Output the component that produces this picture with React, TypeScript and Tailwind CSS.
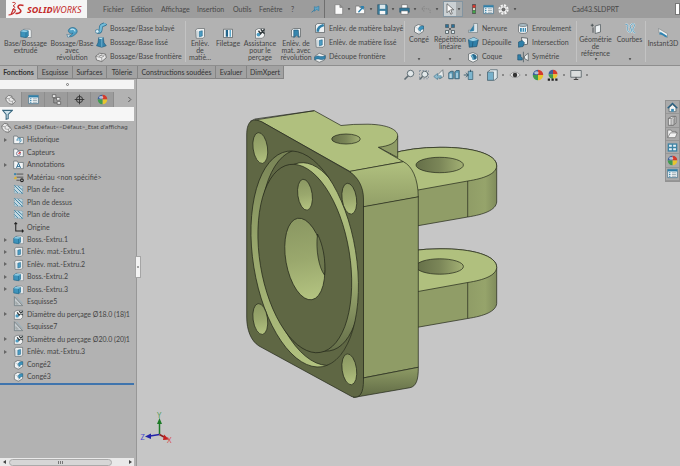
import type { ReactNode } from 'react';

type IconProps = { name: string; className?: string };

const glyphs: Record<string, ReactNode> = {
  extrude: (
    <>
      <path d="M5 3h8l2 2v9H5z" fill="#eef2f4" stroke="#6d7478" strokeWidth="0.8" />
      <path d="M1 6l3-2 7 1v7l-3 2-7-1z" fill="#3d93bb" stroke="#1d6488" strokeWidth="0.9" />
      <path d="M1 6l7 1 3-2-7-1z" fill="#8fcbe2" />
      <path d="M8 7v7" stroke="#1d6488" strokeWidth="0.8" />
    </>
  ),
  revolve: (
    <>
      <path d="M3 5a6 5 0 1 1 9 5c-3 3-7 4-10 2 3 0 6-1 7-4-2 1-5 1-6-3z" fill="#4ea0c6" stroke="#24688c" strokeWidth="0.9" />
      <path d="M6 4c2-2 6-1 6 2" fill="none" stroke="#bfe3f0" strokeWidth="1.6" />
      <path d="M1 10l5 1-3 3z" fill="#e8f2f6" stroke="#24688c" strokeWidth="0.7" />
    </>
  ),
  sweep: (
    <>
      <path d="M3 13c6 1 4-4 5-7s5-2 6-4" fill="none" stroke="#24688c" strokeWidth="5" />
      <path d="M3 13c6 1 4-4 5-7s5-2 6-4" fill="none" stroke="#72bbd8" strokeWidth="3.2" />
      <circle cx="3" cy="12.500" r="2.500" fill="#d8edf5" stroke="#24688c" strokeWidth="0.8" />
    </>
  ),
  loft: (
    <>
      <path d="M5 2h6l1 7 3 4-6 2-7-2 2-4z" fill="#3482aa" stroke="#1b5577" strokeWidth="0.8" />
      <path d="M5 2h6l-2 2H6z" fill="#b7dcea" />
      <path d="M9 4v11" stroke="#7fbad3" strokeWidth="1" />
    </>
  ),
  boundary: (
    <>
      <path d="M1 7l5-4 8 1 1 5-6 5-7-2z" fill="#ececec" stroke="#555" strokeWidth="0.9" />
      <path d="M1 7l8 2 5-5M9 9v5M4 5l8 2M5 8l5-4" fill="none" stroke="#666" strokeWidth="0.7" />
    </>
  ),
  cut: (
    <>
      <path d="M2 4l3-2h9v11l-2 2H3z" fill="#edf0f1" stroke="#5f6669" strokeWidth="0.9" />
      <path d="M7 6l4-1v7l-4 1z" fill="#4b9cc3" stroke="#24688c" strokeWidth="0.8" />
      <path d="M4 5v8" stroke="#9dafb7" strokeWidth="1" />
    </>
  ),
  thread: (
    <>
      <path d="M2 3h12v11H2z" fill="#f0f2f3" stroke="#4d5558" strokeWidth="0.9" />
      <path d="M5 4h3v9H5z" fill="#23658b" />
      <path d="M10 4h2v9h-2z" fill="#5aaace" />
    </>
  ),
  hole: (
    <>
      <path d="M2 4l4-2h8v10l-3 3H2z" fill="#f1f2f2" stroke="#5f6669" strokeWidth="0.9" />
      <circle cx="6" cy="10" r="2.500" fill="#4b9cc3" />
      <path d="M6 5l3 4M9 3l5 6M8 10l6-7" stroke="#30383b" strokeWidth="1.700" />
    </>
  ),
  revcut: (
    <>
      <path d="M2 4l3-2h9v11H2z" fill="#eef1f2" stroke="#50585b" strokeWidth="0.9" />
      <path d="M5 4h6l1 10-3-3-4 3z" fill="#3685ad" stroke="#1b5577" strokeWidth="0.8" />
    </>
  ),
  sweepcut: (
    <>
      <path d="M2 4l3-2h9v12H2z" fill="#eef1f2" stroke="#50585b" strokeWidth="0.9" />
      <path d="M5 13c0-6 3-7 8-9" fill="none" stroke="#2f7fa8" strokeWidth="3.500" />
    </>
  ),
  surfcut: (
    <>
      <path d="M1 7l6-4 8 3-1 6-7 3-6-3z" fill="#eef1f2" stroke="#50585b" strokeWidth="0.8" />
      <path d="M1 8c4-4 8 2 14-2v4c-6 4-9-2-14 2z" fill="#3685ad" stroke="#1b5577" strokeWidth="0.7" />
    </>
  ),
  fillet: (
    <>
      <path d="M2 5l5-3 7 2v7l-6 4-6-3z" fill="#f1f3f4" stroke="#555d60" strokeWidth="0.9" />
      <path d="M7 9c0-3 2-5 7-5v4c-3 0-4 1-4 3z" fill="#3b93bd" stroke="#1f678b" strokeWidth="0.8" />
      <path d="M2 5l6 3v7" fill="none" stroke="#aab4b8" strokeWidth="0.7" />
    </>
  ),
  pattern: (
    <>
      <path d="M2 2h4v4H2zM10 2h4v4h-4z" fill="#2a7199" stroke="#455056" strokeWidth="0.8" />
      <path d="M2 10h4v4H2zM10 10h4v4h-4z" fill="#dcebf1" stroke="#455056" strokeWidth="1" />
      <path d="M6 6l4 4M10 6l-4 4" stroke="#455056" strokeWidth="1" />
    </>
  ),
  rib: (
    <>
      <path d="M9 2h5v12H2v-3h7z" fill="#d9e4e9" stroke="#6a7579" strokeWidth="0.8" />
      <path d="M9 4v8l-6 1z" fill="#2f7fa8" />
    </>
  ),
  draft: (
    <>
      <path d="M2 5l7-3 6 3-2 9-10 1z" fill="#2f7fa8" stroke="#1b4e6c" strokeWidth="0.9" />
      <path d="M2 5l7-3 6 3-7 2z" fill="#9ccfe3" />
      <path d="M8 7l-1 8" stroke="#1b4e6c" strokeWidth="0.8" />
    </>
  ),
  shell: (
    <>
      <path d="M2 4l6-2 6 3v7l-6 3-6-3z" fill="#f2f4f4" stroke="#555d60" strokeWidth="0.9" />
      <path d="M5 6a4 4 0 0 1 7 5l-4 1z" fill="#24688c" />
      <path d="M5 6c3 0 3 2 3 6" fill="none" stroke="#7fc0da" strokeWidth="1.500" />
    </>
  ),
  wrap: (
    <>
      <path d="M2 4v9c2 3 10 3 12 0V4z" fill="#f0f2f3" stroke="#555d60" strokeWidth="0.9" />
      <ellipse cx="8" cy="4" rx="6" ry="2" fill="#a9bcc5" stroke="#555d60" strokeWidth="0.8" />
      <path d="M4 8h8v5H4z" fill="#3b8cb4" />
      <path d="M7 8v5M10 8v5" stroke="#fff" />
    </>
  ),
  intersect: (
    <>
      <path d="M6 2l8 1v8l-7 1z" fill="#f0f2f3" stroke="#454d50" strokeWidth="1" />
      <path d="M2 8l5-2 3 3-2 5-6 1z" fill="#2f7fa8" stroke="#1b4e6c" strokeWidth="0.8" />
    </>
  ),
  mirror: (
    <>
      <path d="M1 5h4v3l2 1v3H1z" fill="#2f7fa8" stroke="#1b4e6c" strokeWidth="0.8" />
      <path d="M15 3v10l-5-3V7z" fill="#eef1f2" stroke="#454d50" strokeWidth="0.9" />
      <path d="M8.500 1v14" stroke="#47565d" strokeWidth="1" />
    </>
  ),
  geometry: (
    <>
      <path d="M7 4l7-2v10l-7 2z" fill="#eef2f4" stroke="#505a5e" strokeWidth="1" />
      <path d="M1 3h4M3 1v4M4 6v7" stroke="#454d50" strokeWidth="1.200" />
    </>
  ),
  curves: (
    <>
      <path d="M2 2c6-1 1 5 3 8s5 3 5 0-3-4-1-7 5-2 5 0-3 4-2 7 1 3 3 3" fill="none" stroke="#e3eef2" strokeWidth="2.200" />
      <path d="M2 2c6-1 1 5 3 8s5 3 5 0-3-4-1-7 5-2 5 0-3 4-2 7 1 3 3 3" fill="none" stroke="#4a91b3" strokeWidth="1.200" />
    </>
  ),
  instant: (
    <>
      <path d="M2 2l12 7v5L3 8z" fill="#f2f4f4" stroke="#737c80" strokeWidth="0.8" />
      <path d="M5 8l8 5" stroke="#2d83b2" strokeWidth="2.500" />
      <path d="M3 10l1-4 3 4z" fill="#2d83b2" />
    </>
  ),
  part: (
    <>
      <path d="M1 6l4-4 5 1v3l3 1 2 4-4 4-5-1-4-4z" fill="#eaeaea" stroke="#5a5a5a" strokeWidth="1" />
      <path d="M1 6l5 1 4-4M6 7v3l5 1 2-4M11 11v4" fill="none" stroke="#777" strokeWidth="0.8" />
    </>
  ),
  list: (
    <>
      <path d="M1 2h14v12H1z" fill="#f4f7f8" stroke="#376b86" strokeWidth="1" />
      <path d="M1 2h14v3H1z" fill="#2f7fa8" />
      <path d="M3 7h2M3 9.500h2M3 12h2" stroke="#2f7fa8" strokeWidth="1.500" />
      <path d="M7 7h6M7 9.500h6M7 12h6" stroke="#768c97" />
    </>
  ),
  config: (
    <>
      <path d="M4 2v11h5M4 6h5" fill="none" stroke="#555" />
      <path d="M2 1h5v4H2zM8 5h5v4H8zM9 11h5v4H9z" fill="#eee" stroke="#555" strokeWidth="1" />
    </>
  ),
  target: (
    <>
      <circle cx="8" cy="8" r="4.500" fill="none" stroke="#333" strokeWidth="1.400" />
      <path d="M8 1v14M1 8h14" stroke="#333" strokeWidth="1.300" />
    </>
  ),
  ball: (
    <>
      <path d="M8 8V1a7 7 0 0 0-7 7z" fill="#3c5f9a" />
      <path d="M8 8V1a7 7 0 0 1 7 7z" fill="#d33b2c" />
      <path d="M8 8h7a7 7 0 0 1-7 7z" fill="#e8c52f" />
      <path d="M8 8v7a7 7 0 0 1-7-7z" fill="#3f9b4e" />
      <ellipse cx="6" cy="5" rx="3" ry="2" fill="#fff" opacity="0.6" />
    </>
  ),
  scene: (
    <>
      <path d="M8 7V1a6 6 0 0 0-6 6z" fill="#3c5f9a" />
      <path d="M8 7V1a6 6 0 0 1 6 6z" fill="#d33b2c" />
      <path d="M8 7h6a6 6 0 0 1-6 6z" fill="#e8c52f" />
      <path d="M8 7v6a6 6 0 0 1-6-6z" fill="#3f9b4e" />
      <path d="M1 14h14" stroke="#222" strokeWidth="3" strokeDasharray="3 2" />
    </>
  ),
  folder: (
    <>
      <path d="M1 3h5l1 2h8v9H1z" fill="#f3f5f6" stroke="#5a666c" strokeWidth="1" />
      <path d="M6 10a3 3 0 1 1 3 2M9 7v3" fill="none" stroke="#2f7fa8" strokeWidth="1.300" />
    </>
  ),
  sensor: (
    <>
      <path d="M1 3h5l1 2h8v9H1z" fill="#f3f5f6" stroke="#5a666c" strokeWidth="1" />
      <circle cx="8" cy="9.500" r="3" fill="none" stroke="#557" />
      <path d="M8 10l3-3" stroke="#d22" strokeWidth="1.500" />
    </>
  ),
  annot: (
    <>
      <path d="M1 3h5l1 2h8v9H1z" fill="#f3f5f6" stroke="#5a666c" strokeWidth="1" />
      <path d="M5 13l3-7 3 7M6 11h4" fill="none" stroke="#2a6c93" strokeWidth="1.400" />
    </>
  ),
  material: (
    <>
      <path d="M5 3h10M5 7.500h10M5 12h5" stroke="#444" strokeWidth="1.200" />
      <circle cx="3" cy="3" r="1.700" fill="#3a86ae" />
      <path d="M1 9l3-3 2 3-3 2z" fill="#d9b53b" />
      <circle cx="13" cy="12" r="2" fill="none" stroke="#222" strokeWidth="1.500" />
    </>
  ),
  plane: (
    <>
      <path d="M2 2l12 1v11L2 13z" fill="#c3d8e1" stroke="#6d98ac" strokeWidth="1" strokeDasharray="2 1" />
      <path d="M2 2l12 12M7 3l7 6M2 8l5 5" stroke="#4485a4" strokeWidth="1.400" />
    </>
  ),
  origin: <path d="M4 1v12h11M2 3l2-2 2 2M13 11l2 2-2 2" fill="none" stroke="#222" strokeWidth="1.500" />,
  sketch: (
    <>
      <path d="M2 1v13h12z" fill="#c6cccf" stroke="#657177" strokeWidth="1" />
      <path d="M4 8v4h4z" fill="#b2b2b2" stroke="#8a969b" strokeWidth="0.700" />
      <path d="M5 1l9 10" stroke="#8fb0bf" strokeWidth="1.200" />
    </>
  ),
  home: (
    <>
      <path d="M3 8v6h10V8L8 4z" fill="#f4f4f4" stroke="#4a5a62" strokeWidth="1" />
      <path d="M1 9l7-7 7 7" fill="none" stroke="#255f82" strokeWidth="2" />
      <path d="M6 10h4v4H6z" fill="#3d8fb8" />
    </>
  ),
  library: (
    <>
      <path d="M2 5l5-3h6v10l-4 3H2z" fill="#e4e4e4" stroke="#5a5a5a" strokeWidth="1" />
      <path d="M6 6v9M9 5v10M11 3v10M2 5h5l4-3" fill="none" stroke="#666" strokeWidth="1" />
    </>
  ),
  open: <path d="M1 14V3h5l1 2h6v2h2l-3 7zM1 14l4-7h9" fill="#f3f3f3" stroke="#6a6a6a" strokeWidth="1" />,
  palette: (
    <>
      <path d="M1 2h14v12H1z" fill="#3f84a5" />
      <path d="M3 4h4v3H3zM9 4h4v3H9zM3 9h4v3H3zM9 9h4v3H9z" fill="#e7f1f5" />
    </>
  ),
  file: <path d="M3 1h7l4 4v10H3zM10 1v4h4" fill="#fbfbfb" stroke="#777" strokeWidth="0.9" />,
  openfile: (
    <>
      <path d="M1 14V3h5l1 2h7v9z" fill="#fafafa" stroke="#666" strokeWidth="0.9" />
      <path d="M5 12l7-8M8 4h4v4" fill="none" stroke="#2d7fab" strokeWidth="1.900" />
    </>
  ),
  save: (
    <>
      <path d="M1 1h13l1 2v12H1z" fill="#3c7f9f" stroke="#33576a" strokeWidth="1" />
      <path d="M4 1h8v6H4z" fill="#dce8ed" />
      <path d="M4 10h8v5H4z" fill="#f7f7f7" />
    </>
  ),
  print: (
    <>
      <path d="M4 1h8v5H4z" fill="#fff" stroke="#555" strokeWidth="0.8" />
      <path d="M1 6h14v6H1z" fill="#2f7699" stroke="#2c5368" strokeWidth="0.8" />
      <path d="M3 10h10v5H3z" fill="#fff" stroke="#555" strokeWidth="0.8" />
    </>
  ),
  undo: <path d="M5 3L1 7l4 4M1 7h9a4 4 0 0 1 3 6" fill="none" stroke="#888" strokeWidth="1.500" strokeDasharray="2 1" />,
  cursor: <path d="M4 1v12l3-3 2 5 2-1-2-5h4z" fill="#fff" stroke="#555" strokeWidth="1" />,
  light: (
    <>
      <path d="M5 0h6v16H5z" fill="#555" />
      <circle cx="8" cy="3.500" r="2.400" fill="#d43a2f" />
      <circle cx="8" cy="8" r="1.800" fill="#f2ead0" />
      <circle cx="8" cy="12.500" r="2.400" fill="#44a24a" />
    </>
  ),
  gear: (
    <>
      <circle cx="8" cy="8" r="6" fill="none" stroke="#f5f5f5" strokeWidth="3" strokeDasharray="3 1.700" />
      <circle cx="8" cy="8" r="4.500" fill="#f1f1f1" />
      <circle cx="8" cy="8" r="2.300" fill="#777" stroke="#444" strokeWidth="1" />
    </>
  ),
  pin: (
    <>
      <path d="M6 3l3 1 5-2v8l-4-2-4 3z" fill="#61a6c8" stroke="#2d7aa1" strokeWidth="1" />
      <path d="M7 8l-6 5" stroke="#2d7aa1" strokeWidth="1.500" />
    </>
  ),
  zoom: (
    <>
      <circle cx="10" cy="6" r="4.300" fill="#e2e8ea" stroke="#5d6b72" strokeWidth="1.300" />
      <path d="M7 9l-5 5" stroke="#5d6b72" strokeWidth="2.200" />
    </>
  ),
  zoomarea: (
    <>
      <path d="M2 2h12v11H2z" fill="none" stroke="#789" strokeDasharray="2 2" />
      <circle cx="9" cy="7" r="4" fill="#e2e8ea" stroke="#5d6b72" strokeWidth="1.300" />
      <path d="M6 10l-4 4" stroke="#5d6b72" strokeWidth="2" />
    </>
  ),
  prev: (
    <>
      <path d="M13 1L5 9l4 4 5-3z" fill="#e7eaeb" stroke="#5d6b72" strokeWidth="1" />
      <path d="M1 10l5-4v3h5v3H6v2z" fill="#8fbacd" stroke="#316b86" strokeWidth="0.700" />
    </>
  ),
  section: (
    <>
      <path d="M1 5l3-2h3v10H1zM9 4l2-2h4v11H9z" fill="#5b9bb8" stroke="#31576a" strokeWidth="1" />
      <path d="M2 6h3v6H2zM11 5h2v7h-2z" fill="#b9d7e3" />
    </>
  ),
  orient: (
    <>
      <path d="M7 3h6v11H7z" fill="#7db6cf" stroke="#31576a" strokeWidth="0.900" />
      <path d="M1 8h6M4 5l3 3-3 3M10 1v3" fill="none" stroke="#31576a" strokeWidth="1.200" />
    </>
  ),
  display: (
    <>
      <path d="M2 4l4-3h9v11l-4 3H2z" fill="#dfe9ed" stroke="#4d626c" strokeWidth="1" />
      <path d="M2 4h8v11H2z" fill="#77b1cb" stroke="#4d626c" strokeWidth="0.800" />
    </>
  ),
  eye: (
    <>
      <path d="M1 8q7-8 14 0-7 7-14 0z" fill="#e5e5e5" stroke="#888" strokeWidth="1" />
      <circle cx="8" cy="8" r="3" fill="#333" />
    </>
  ),
  monitor: (
    <>
      <path d="M1 2h14v9H1z" fill="#dadddd" stroke="#606a6e" strokeWidth="1.200" />
      <path d="M8 11v3M5 14h6" stroke="#444" strokeWidth="1.500" />
    </>
  ),
};

function Icon({ name, className = 'w-3 h-3' }: IconProps) {
  return (
    <svg viewBox="0 0 16 16" className={`shrink-0 ${className}`} aria-hidden="true">
      {glyphs[name]}
    </svg>
  );
}

function Caret() {
  return (
    <svg viewBox="0 0 6 4" className="w-[4px] h-[3px] shrink-0" aria-hidden="true">
      <path d="M1 0h4L3 3z" fill="#3c3c3c" />
    </svg>
  );
}

const menus = [
  { label: 'Fichier', w: 'w-7' },
  { label: 'Edition', w: 'w-[30px]' },
  { label: 'Affichage', w: 'w-9' },
  { label: 'Insertion', w: 'w-9' },
  { label: 'Outils', w: 'w-[26px]' },
  { label: 'Fenêtre', w: 'w-8' },
  { label: '?', w: 'w-4' },
];

function TitleBar() {
  return (
    <header className="flex h-[18px] items-center bg-[#9c9c9c] overflow-hidden">
      <div className="ml-[6px] flex h-[18px] w-[81px] shrink-0 items-center gap-[3px] bg-[#f5f5f5] pl-[2px] text-[#c42b2b]">
        <svg viewBox="0 0 32 32" className="h-4 w-4 shrink-0" aria-hidden="true">
          <path d="M9 3c8-1 7 3 1 7 6 1 3 5-1 7" fill="none" stroke="#c42b2b" strokeWidth="2" />
          <path d="M1 28c12-1 18-11 10-12L6 27" fill="none" stroke="#c42b2b" strokeWidth="2.400" />
          <path d="M31 9c-12-3-13 3-8 7s3 9-8 9" fill="none" stroke="#c42b2b" strokeWidth="3" />
        </svg>
        <span className="font-['Noto_Sans','Open_Sans',sans-serif] text-[9px] leading-none italic">
          <b>SOLID</b>WORKS
        </span>
      </div>
      <nav className="ml-4 flex text-[7px] leading-none text-[#484848]">
        {menus.map(m => (
          <button key={m.label} type="button" className={`shrink-0 text-left ${m.w}`}>{m.label}</button>
        ))}
      </nav>
      <Icon name="pin" className="ml-1 h-[9px] w-[9px]" />
      <div className="ml-1 flex h-full shrink-0 items-center gap-[4px] border-l border-[#6f6f6f] pl-2">
        {['file', 'openfile', 'save', 'print', 'undo'].map(name => (
          <button key={name} type="button" aria-label={name} className="flex items-center gap-[3px]">
            <Icon name={name} className="h-[11px] w-[11px]" />
            <Caret />
          </button>
        ))}
        <button type="button" aria-label="cursor" className="flex h-4 items-center border border-[#8394a0] bg-[#cbd1d4]">
          <Icon name="cursor" />
          <span className="flex h-full items-center bg-[#a7acae] px-px"><Caret /></span>
        </button>
        <button type="button" aria-label="light" className="ml-[2px]"><Icon name="light" className="h-[10px] w-[10px]" /></button>
        <button type="button" aria-label="list"><Icon name="list" className="h-[11px] w-[11px]" /></button>
        <button type="button" aria-label="gear" className="flex items-center gap-1">
          <Icon name="gear" className="h-[11px] w-[11px]" />
          <Caret />
        </button>
      </div>
      <h1 className="ml-auto text-[7px] leading-none text-[#484848]">Cad43.SLDPRT</h1>
      <div className="ml-[56px] h-3 w-[5px] shrink-0 border border-[#777] bg-white" />
    </header>
  );
}

function BigTool({ icon, lines, width, arrow, high }: { icon: string; lines: string[]; width: string; arrow?: boolean; high?: boolean }) {
  return (
    <button type="button" className={`flex h-full shrink-0 flex-col items-center ${width} ${high ? 'pt-[5px]' : 'pt-[9px]'}`}>
      <Icon name={icon} className="mb-px h-3 w-3" />
      {lines.map(line => (
        <span key={line} className="whitespace-nowrap text-[7px] leading-[7px]">{line}</span>
      ))}
      {arrow && <span className="mt-auto flex pb-1"><Caret /></span>}
    </button>
  );
}

function SmallTools({ items, width }: { items: string[][]; width: string }) {
  return (
    <div className={`flex h-full shrink-0 flex-col justify-around pt-[3px] pb-px ${width}`}>
      {items.map(([icon, label]) => (
        <button key={label} type="button" className="flex items-center gap-[3px] whitespace-nowrap text-[7px] leading-none">
          <Icon name={icon} />
          {label}
        </button>
      ))}
    </div>
  );
}

function Divider() {
  return <div className="my-[3px] w-px shrink-0 bg-[#c3c3c3]" />;
}

function Ribbon() {
  return (
    <div className="flex h-12 overflow-hidden border-b border-[#8e8e8e] bg-[#b2b2b2] pl-[2px] text-[#454545]">
      <BigTool icon="extrude" width="w-[47px]" lines={['Base/Bossage', 'extrudé']} />
      <BigTool icon="revolve" width="w-[46px]" lines={['Bossage/Base', 'avec', 'révolution']} />
      <SmallTools width="w-[90px]" items={[['sweep', 'Bossage/Base balayé'], ['loft', 'Bossage/Base lissé'], ['boundary', 'Bossage/Base frontière']]} />
      <Divider />
      <BigTool icon="cut" width="w-[28px]" lines={['Enlèv.', 'de', 'matiè...']} />
      <BigTool icon="thread" width="w-[28px]" lines={['Filetage']} />
      <BigTool icon="hole" width="w-[36px]" lines={['Assistance', 'pour le', 'perçage']} />
      <BigTool icon="revcut" width="w-[36px]" lines={['Enlèv. de', 'mat. avec', 'révolution']} />
      <SmallTools width="w-[90px]" items={[['sweepcut', 'Enlèv. de matière balayé'], ['cut', 'Enlèv. de matière lissé'], ['surfcut', 'Découpe frontière']]} />
      <Divider />
      <BigTool high arrow icon="fillet" width="w-[28px]" lines={['Congé']} />
      <BigTool high arrow icon="pattern" width="w-[34px]" lines={['Répétition', 'linéaire']} />
      <SmallTools width="w-[50px]" items={[['rib', 'Nervure'], ['draft', 'Dépouille'], ['shell', 'Coque']]} />
      <SmallTools width="w-[59px]" items={[['wrap', 'Enroulement'], ['intersect', 'Intersection'], ['mirror', 'Symétrie']]} />
      <Divider />
      <BigTool high arrow icon="geometry" width="w-[37px]" lines={['Géométrie', 'de', 'référence']} />
      <BigTool high arrow icon="curves" width="w-[31px]" lines={['Courbes']} />
      <Divider />
      <BigTool icon="instant" width="w-[34px]" lines={['Instant3D']} />
    </div>
  );
}

const tabs = [
  { label: 'Fonctions', w: 'w-[38px]' },
  { label: 'Esquisse', w: 'w-[35px]' },
  { label: 'Surfaces', w: 'w-[34px]' },
  { label: 'Tôlerie', w: 'w-[31px]' },
  { label: 'Constructions soudées', w: 'w-[78px]' },
  { label: 'Evaluer', w: 'w-[31px]' },
  { label: 'DimXpert', w: 'w-[37px]' },
];

const viewTools = [
  { name: 'zoom' },
  { name: 'zoomarea' },
  { name: 'prev' },
  { name: 'section' },
  { name: 'orient', caret: true },
  { name: 'display', caret: true },
  { name: 'eye', caret: true },
  { name: 'ball' },
  { name: 'scene', caret: true },
  { name: 'monitor', caret: true },
];

function TabRow() {
  return (
    <div className="flex h-[13px] bg-[#c6c6c6]">
      <div role="tablist" className="flex shrink-0 bg-[#a2a2a2] text-[7px] leading-none text-[#333]">
        {tabs.map((tab, i) => (
          <button
            key={tab.label}
            type="button"
            role="tab"
            aria-selected={i === 0}
            className={`whitespace-nowrap border-r border-[#858585] ${tab.w} ${i === 0 ? 'bg-[#b2b2b2] font-bold' : 'border-b'}`}
          >
            {tab.label}
          </button>
        ))}
      </div>
      <div className="ml-auto mr-[90px] flex h-[18px] shrink-0 items-center gap-[3px]">
        {viewTools.map(t => (
          <button key={t.name} type="button" aria-label={t.name} className="flex items-center gap-[4px]">
            <Icon name={t.name} />
            {t.caret && <span className="mr-[2px] h-[2px] w-[2px] bg-[#888]" />}
          </button>
        ))}
      </div>
    </div>
  );
}

const features = [
  { icon: 'folder', label: 'Historique', open: true },
  { icon: 'sensor', label: 'Capteurs' },
  { icon: 'annot', label: 'Annotations', open: true },
  { icon: 'material', label: 'Matériau <non spécifié>' },
  { icon: 'plane', label: 'Plan de face' },
  { icon: 'plane', label: 'Plan de dessus' },
  { icon: 'plane', label: 'Plan de droite' },
  { icon: 'origin', label: 'Origine' },
  { icon: 'extrude', label: 'Boss.-Extru.1', open: true },
  { icon: 'cut', label: 'Enlèv. mat.-Extru.1', open: true },
  { icon: 'cut', label: 'Enlèv. mat.-Extru.2', open: true },
  { icon: 'extrude', label: 'Boss.-Extru.2', open: true },
  { icon: 'extrude', label: 'Boss.-Extru.3', open: true },
  { icon: 'sketch', label: 'Esquisse5' },
  { icon: 'hole', label: 'Diamètre du perçage Ø18.0 (18)1', open: true },
  { icon: 'sketch', label: 'Esquisse7' },
  { icon: 'hole', label: 'Diamètre du perçage Ø20.0 (20)1', open: true },
  { icon: 'cut', label: 'Enlèv. mat.-Extru.3', open: true },
  { icon: 'fillet', label: 'Congé2' },
  { icon: 'fillet', label: 'Congé3' },
];

function FeaturePanel() {
  return (
    <aside className="relative flex w-[137px] shrink-0 flex-col border-r border-[#979797] bg-[#b2b2b2] text-[#454545]">
      <div className="mt-px mr-[2px] flex h-[9px] items-center justify-center bg-[#f4f4f4]">
        <span className="h-[3px] w-[3px] rounded-full border border-[#777]" />
      </div>
      <div className="mt-[3px] flex h-[15px] items-stretch">
        {['part', 'list', 'config', 'target', 'ball'].map((name, i) => (
          <button
            key={name}
            type="button"
            aria-label={name}
            className={`flex items-center justify-center border-r border-[#8d8d8d] ${i === 0 ? 'w-[22px]' : 'w-[23px] bg-[#9c9c9c]'}`}
          >
            <Icon name={name} className="h-[11px] w-[11px]" />
          </button>
        ))}
        <button type="button" aria-label="Suivant" className="ml-auto mr-1 flex items-center">
          <svg viewBox="0 0 4 6" className="h-[5px] w-[4px]" aria-hidden="true">
            <path d="M0 0l3 3-3 3" fill="none" stroke="#444" />
          </svg>
        </button>
      </div>
      <div className="mr-[2px] flex h-[14px] items-center bg-[#f6f6f6] pl-[2px]">
        <svg viewBox="0 0 16 16" className="h-[11px] w-[11px] shrink-0" aria-hidden="true">
          <path d="M1 2h14L9 8v6l-3 1V8z" fill="#cfe2eb" stroke="#39677f" strokeWidth="1.500" />
        </svg>
        <input aria-label="Filtre" className="min-w-0 flex-1 bg-transparent text-[7px] outline-none" />
      </div>
      <ul className="mr-[2px] grid h-[264px] auto-rows-fr border-b-2 border-[#3f74ad] text-[7px] leading-none">
        <li className="flex items-center gap-[2px] whitespace-nowrap pl-px font-['Noto_Sans','Open_Sans',sans-serif] text-[6px]">
          <Icon name="part" className="h-[11px] w-[11px]" />
          <span>Cad43&nbsp; (Défaut&lt;&lt;Défaut&gt;_Etat d'affichag</span>
        </li>
        {features.map(f => (
          <li key={f.label} className="flex items-center gap-[3px] whitespace-nowrap pl-1">
            <span className="flex w-[6px] items-center">
              {f.open && (
                <svg viewBox="0 0 3 4" className="h-[4px] w-[3px]" aria-hidden="true">
                  <path d="M0 0l3 2-3 2z" fill="#666" />
                </svg>
              )}
            </span>
            <Icon name={f.icon} className="h-[11px] w-[11px]" />
            <span>{f.label}</span>
          </li>
        ))}
      </ul>
      <div className="mr-[2px] mt-auto flex h-2 items-center bg-[#e9e9e9]">
        <svg viewBox="0 0 3 4" className="mx-[3px] h-[4px] w-[3px]" aria-hidden="true"><path d="M3 0L0 2l3 2z" fill="#444" /></svg>
        <div className="flex h-[7px] w-[103px] items-center justify-center gap-px rounded-sm border border-[#aaa] bg-[#d6d6d6]">
          <span className="h-[3px] w-px bg-[#777]" />
          <span className="h-[3px] w-px bg-[#777]" />
          <span className="h-[3px] w-px bg-[#777]" />
        </div>
        <svg viewBox="0 0 3 4" className="ml-auto mr-[2px] h-[4px] w-[3px]" aria-hidden="true"><path d="M0 0l3 2-3 2z" fill="#444" /></svg>
      </div>
      <button type="button" aria-label="Réduire" className="absolute -right-[5px] top-[177px] z-10 flex h-[22px] w-[6px] items-center justify-center border border-[#a5a5a5] bg-[#f3f3f3]">
        <span className="h-[2px] w-[2px] rounded-full bg-[#888]" />
      </button>
    </aside>
  );
}

const boltHoles = [
  [260.3, 148],
  [349.3, 198.7],
  [260.3, 319],
  [349.3, 369.3],
  [305, 194.7],
];

function Lug({ dy }: { dy: number }) {
  return (
    <g transform={`translate(0 ${dy})`}>
      <path d="M390 154Q412 147.300 440 147.300C472 147 497 154 496.700 166V202C496 210 484 214.500 467.700 217L418 225.700H390z" fill="url(#lugSide)" />
      <path d="M390 154Q412 147.300 440 147.300C472 147 497 154 496.700 166C496 174 484 178.500 467.700 181L418 190H390z" fill="#b0c07e" />
      <path d="M467.700 181V217" />
      <ellipse cx="439.700" cy="165" rx="23.700" ry="7.700" fill="url(#bore)" />
    </g>
  );
}

function Model() {
  return (
    <svg viewBox="137 79 543 387" className="absolute inset-0 h-full w-full" role="img" aria-label="Cad43">
      <defs>
        <linearGradient id="lugSide" gradientUnits="userSpaceOnUse" x1="418" y1="0" x2="497" y2="0">
          <stop offset="0" stopColor="#909d67" />
          <stop offset="0.650" stopColor="#909d67" />
          <stop offset="0.850" stopColor="#96a46b" />
          <stop offset="1" stopColor="#7f8b5b" />
        </linearGradient>
        <linearGradient id="bore">
          <stop offset="0" stopColor="#656f48" />
          <stop offset="0.500" stopColor="#7b8658" />
          <stop offset="1" stopColor="#a3b174" />
        </linearGradient>
        <linearGradient id="bolt" x1="0" y1="0" x2="0" y2="1">
          <stop offset="0" stopColor="#8a9762" />
          <stop offset="0.500" stopColor="#9aa86d" />
          <stop offset="1" stopColor="#b4c481" />
        </linearGradient>
        <linearGradient id="wall" x1="0" y1="0" x2="0" y2="1">
          <stop offset="0" stopColor="#747f53" />
          <stop offset="0.400" stopColor="#95a36a" />
          <stop offset="1" stopColor="#b5c582" />
        </linearGradient>
        <linearGradient id="islandWall" x1="0" y1="0" x2="0" y2="1">
          <stop offset="0" stopColor="#b5c582" />
          <stop offset="0.600" stopColor="#a5b477" />
          <stop offset="1" stopColor="#66704a" />
        </linearGradient>
        <linearGradient id="fillet" x1="0" y1="0" x2="0" y2="1">
          <stop offset="0" stopColor="#b1c17f" />
          <stop offset="1" stopColor="#919e67" />
        </linearGradient>
        <linearGradient id="lowFillet" x1="0" y1="0" x2="0" y2="1">
          <stop offset="0" stopColor="#8e9b65" />
          <stop offset="1" stopColor="#606a45" />
        </linearGradient>
        <clipPath id="groove">
          <ellipse cx="304.700" cy="259" rx="51.500" ry="109.100" transform="rotate(-9.200 304.700 259)" />
        </clipPath>
      </defs>
      <g stroke="#23271a" strokeWidth="0.700" strokeLinejoin="round">
        <Lug dy={101.5} />
        <Lug dy={0} />

        <path d="M378 147L397.700 157.500V136H378z" fill="#8f9c66" />
        <path d="M255 120L314.300 110.700L341 125.500Q353 124 368 124.200C388 124.500 398 130 397.700 136C397 143 389 146 378.300 147.300L403.300 161.700L350 171.500L262 122z" fill="#b0c07e" />
        <path d="M250 121.500L255 119L314.300 110.700" fill="none" />
        <ellipse cx="346" cy="139" rx="14.300" ry="5" fill="url(#bore)" />

        <path d="M350 171.300L403.300 161.700C412 166 418 178 418.300 197L363.500 207z" fill="url(#fillet)" />
        <path d="M363 206.800L418.300 196.800V367.300L363 378z" fill="#8f9c66" />
        <path d="M363 378L418.300 367.300C418.500 380 416 386.500 410 387.700L353.500 397.500z" fill="url(#lowFillet)" />

        <path d="M246.700 135C246.700 123 251 117 261.500 121.700L349 171.300C358 177 363.500 187 363.500 199V380C363.500 393 360 399 352 396.700L259 346C251 341 246.700 330 246.700 317z" fill="#5f6744" />

        <g clipPath="url(#groove)">
          <rect x="240" y="140" width="130" height="240" fill="url(#wall)" />
          <ellipse cx="314.200" cy="257.400" rx="51.500" ry="109.100" transform="rotate(-9.200 314.200 257.400)" fill="#5f6744" />
          <ellipse cx="314.300" cy="256.900" rx="44.900" ry="95.200" transform="rotate(-9.300 314.300 256.900)" fill="url(#islandWall)" />
          <ellipse cx="304.800" cy="258.500" rx="44.900" ry="95.200" transform="rotate(-9.300 304.800 258.500)" fill="#5f6744" />
        </g>
        <ellipse cx="304.700" cy="259" rx="51.500" ry="109.100" transform="rotate(-9.200 304.700 259)" fill="none" />

        <ellipse cx="304.800" cy="259" rx="19" ry="41.300" transform="rotate(-10 304.800 259)" fill="url(#bolt)" />
        <path d="M317.500 234C315.500 250 319 268 324.500 275C326 260 323 245 317.500 234z" fill="#6d774e" />
        {boltHoles.map(([x, y]) => (
          <ellipse key={`${x}-${y}`} cx={x} cy={y} rx="7.200" ry="15.600" transform={`rotate(-8 ${x} ${y})`} fill="url(#bolt)" />
        ))}
      </g>

      <g strokeWidth="1.500">
        <path d="M159.500 434V424" stroke="#1c7a25" />
        <path d="M157 424l2.500-6 2.500 6z" fill="#1c7a25" />
        <path d="M159.500 434.500L150 436" stroke="#2323a8" />
        <path d="M151 433.500l-6 3 6 2.500z" fill="#2323a8" />
        <path d="M159.500 434.500L164 437" stroke="#8d1f1f" />
        <path d="M164 434.500l5 5-6 .5z" fill="#c52020" />
      </g>
      <g fontSize="7">
        <text x="157" y="418" fill="#4c9a52">Y</text>
        <text x="140.500" y="440" fill="#4a4ad0">Z</text>
        <text x="167" y="443" fill="#d84a4a">X</text>
      </g>
    </svg>
  );
}

export default function App() {
  return (
    <div className="flex min-h-screen flex-col overflow-hidden bg-[#c6c6c6] font-['Lato','Open_Sans',sans-serif]">
      <TitleBar />
      <Ribbon />
      <TabRow />
      <div className="flex flex-1">
        <FeaturePanel />
        <main className="relative flex flex-1 justify-end">
          <Model />
          <div className="relative mt-[21px] flex h-[82px] w-[15px] flex-col justify-around border border-[#929292] bg-[#aaaaaa]">
            {['home', 'library', 'open', 'palette', 'ball', 'list'].map(name => (
              <button key={name} type="button" aria-label={name} className="flex flex-1 items-center justify-center border-b border-[#969696]">
                <Icon name={name} className="h-[11px] w-[11px]" />
              </button>
            ))}
          </div>
        </main>
      </div>
    </div>
  );
}
